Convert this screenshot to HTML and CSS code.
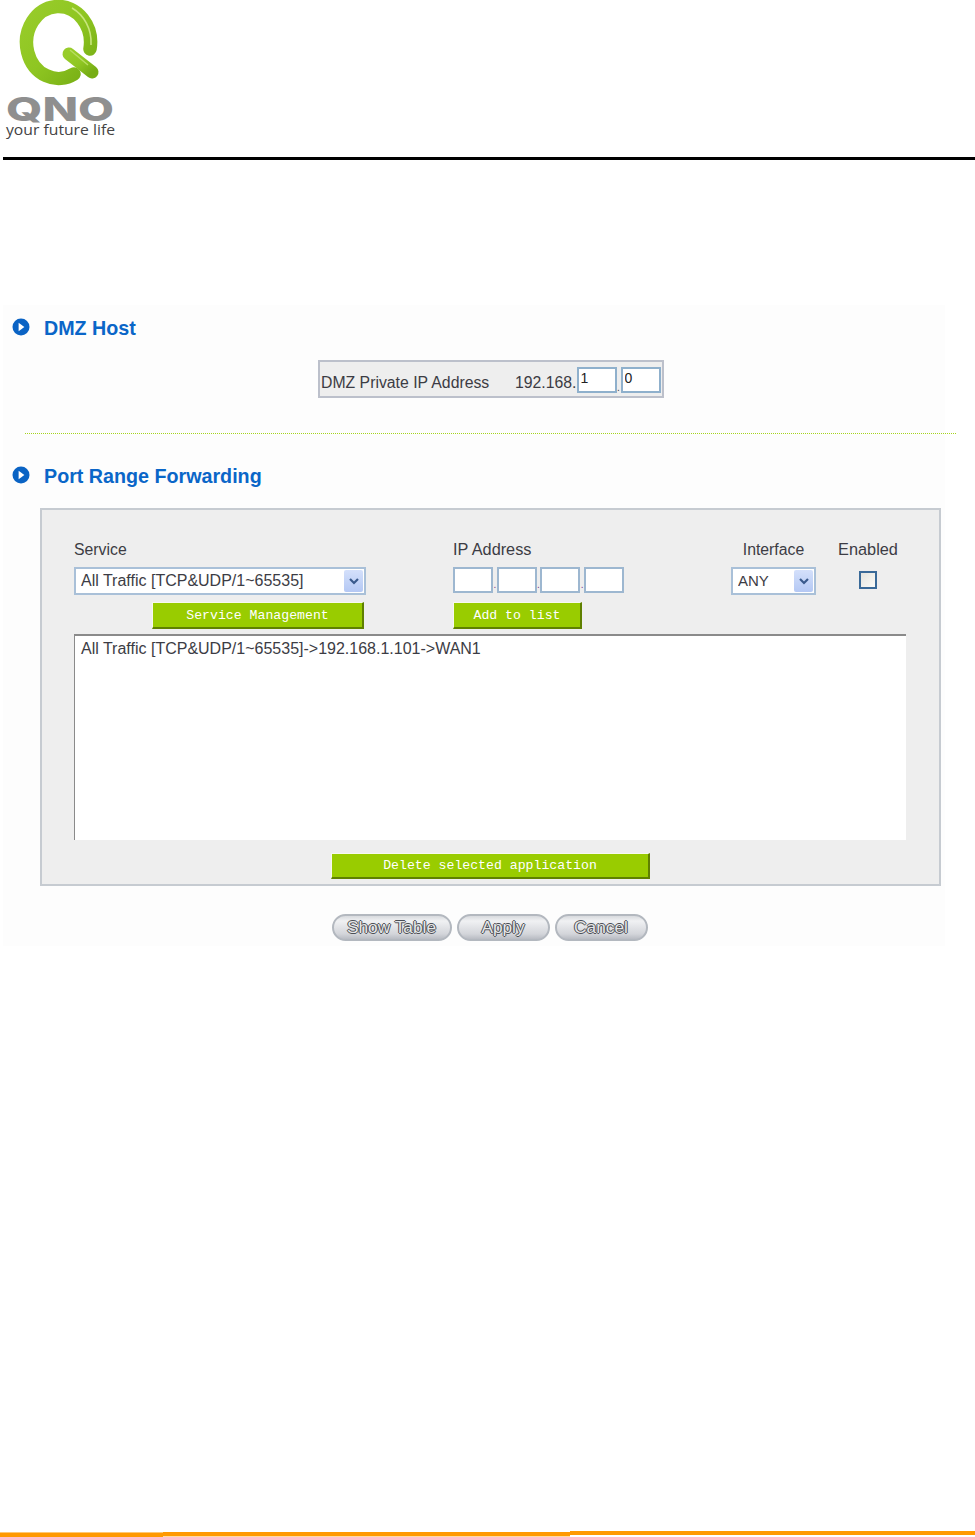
FILE: index.html
```html
<!DOCTYPE html>
<html lang="en">
<head>
    <meta charset="UTF-8">
    <meta name="viewport" content="width=device-width, initial-scale=1.0">
    <title>DMZ Host and Port Range Forwarding</title>
    <link rel="stylesheet" href="styles.css">
</head>
<body>
    <div class="header">
        <svg class="logo" width="120" height="140" viewBox="0 0 120 140">
            <defs>
                <linearGradient id="ring" x1="0" y1="0" x2="1" y2="1">
                    <stop offset="0" stop-color="#98cc2a"/>
                    <stop offset="0.5" stop-color="#8fc622"/>
                    <stop offset="1" stop-color="#76ad14"/>
                </linearGradient>
            </defs>
            <path d="M90 49 A32 36 0 1 0 74 74" fill="none" stroke="url(#ring)" stroke-width="13.5" stroke-linecap="round"/>
            <path d="M69 54 L92 72" fill="none" stroke="url(#ring)" stroke-width="13" stroke-linecap="round"/>
            <path d="M72 8 C84 15 92 29 91 45" fill="none" stroke="#c8e67c" stroke-width="1.6"/>
            <path d="M70 50 L88 65" fill="none" stroke="#b9dd62" stroke-width="1.4"/>
            <text class="logo-name" x="6" y="121" textLength="108" lengthAdjust="spacingAndGlyphs">QNO</text>
            <text class="logo-tag" x="6" y="135" textLength="109" lengthAdjust="spacingAndGlyphs">your future life</text>
        </svg>
    </div>

    <div class="content">
        <h2 class="section-title">
            <svg class="bullet" width="18" height="18" viewBox="0 0 18 18">
                <circle cx="9" cy="9" r="8.5" fill="#0a63c4"/>
                <path d="M6.6 4.8 L12.4 9 L6.6 13.2 Z" fill="#fff"/>
            </svg>
            DMZ Host
        </h2>

        <div class="dmz-box">
            <span class="dmz-label">DMZ Private IP Address</span>
            <span>192.168.</span><input class="octet" type="text" value="1"><span class="dot">.</span><input class="octet" type="text" value="0">
        </div>

        <div class="divider"></div>

        <h2 class="section-title">
            <svg class="bullet" width="18" height="18" viewBox="0 0 18 18">
                <circle cx="9" cy="9" r="8.5" fill="#0a63c4"/>
                <path d="M6.6 4.8 L12.4 9 L6.6 13.2 Z" fill="#fff"/>
            </svg>
            Port Range Forwarding
        </h2>

        <div class="forward-box">
            <div class="form-grid">
                <div>Service</div>
                <div class="wide-label">IP Address</div>
                <div class="center">Interface</div>
                <div class="center wide-label enabled-label">Enabled</div>

                <div class="select-wrap service-select">
                    <select><option>All Traffic [TCP&amp;UDP/1~65535]</option></select>
                    <span class="arrow"><svg width="10" height="7" viewBox="0 0 10 7"><path d="M1 1 L5 5 L9 1" fill="none" stroke="#3a5a8c" stroke-width="2.2"/></svg></span>
                </div>
                <div class="ip-group">
                    <input class="octet-wide" type="text"><span class="dot">.</span><input class="octet-wide" type="text"><span class="dot">.</span><input class="octet-wide" type="text"><span class="dot">.</span><input class="octet-wide" type="text">
                </div>
                <div class="select-wrap iface-select">
                    <select><option>ANY</option></select>
                    <span class="arrow"><svg width="10" height="7" viewBox="0 0 10 7"><path d="M1 1 L5 5 L9 1" fill="none" stroke="#3a5a8c" stroke-width="2.2"/></svg></span>
                </div>
                <div class="center check-cell"><input class="check" type="checkbox"></div>

                <div class="button-cell service-cell"><button class="green-button service-btn">Service Management</button></div>
                <div class="button-cell"><button class="green-button add-btn">Add to list</button></div>
            </div>

            <div class="rule-list">All Traffic [TCP&amp;UDP/1~65535]-&gt;192.168.1.101-&gt;WAN1</div>

            <div class="delete-row"><button class="green-button delete-btn">Delete selected application</button></div>
        </div>

        <div class="actions">
            <button class="pill show-btn">Show Table</button>
            <button class="pill apply-btn">Apply</button>
            <button class="pill cancel-btn">Cancel</button>
        </div>
    </div>

    <div class="footer">
        <div class="foot-a"></div>
        <div class="foot-b"></div>
        <div class="foot-c"></div>
    </div>
</body>
</html>
```

FILE: styles.css
```css
body {
    margin: 0;
    height: 1537px;
    overflow: hidden;
    display: flex;
    flex-direction: column;
    background: #fff;
    color: #3c3c44;
    font-family: "Liberation Sans", Arial, sans-serif;
    font-size: 15.8px;
}

.header {
    height: 157px;
    margin-left: 3px;
    border-bottom: 3px solid #000;
}

.logo {
    display: block;
    margin-left: -3px;
}

.logo-name {
    font-family: Inter, "Liberation Sans", sans-serif;
    font-weight: 800;
    font-size: 33px;
    fill: #8f8f8f;
}

.logo-tag {
    font-family: "Open Sans", "Liberation Sans", sans-serif;
    font-size: 15px;
    fill: #444;
}

.content {
    width: 942px;
    height: 641px;
    margin-top: 145px;
    margin-left: 3px;
    background: #fdfdfd;
    box-sizing: border-box;
    padding-top: 12px;
}

.section-title {
    display: flex;
    align-items: center;
    gap: 14px;
    height: 22px;
    margin: 0 0 0 9px;
    color: #0a66c8;
    font-size: 19.7px;
    font-weight: bold;
}

.bullet {
    margin-top: -3px;
}

.dmz-box {
    display: flex;
    align-items: center;
    width: 346px;
    height: 38px;
    box-sizing: border-box;
    margin: 21px 0 0 315px;
    padding: 2px 0 0 1px;
    background: #eee;
    border: 2px solid #bcc0cb;
    white-space: nowrap;
}

.dmz-label {
    width: 194px;
}

.dmz-box span {
    padding-top: 6px;
}

.dmz-box .dot {
    padding: 0 0 3px;
}

.octet {
    width: 40px;
    height: 26px;
    box-sizing: border-box;
    margin: 0;
    padding: 0 0 5px 2px;
    border: 2px solid #8fb0cc;
    background: #fff;
    color: #222;
    font-family: "Liberation Sans", Arial, sans-serif;
    font-size: 14px;
    outline: none;
}

.dot {
    width: 4px;
    font-size: 10px;
    text-align: center;
    align-self: flex-end;
}

.divider {
    height: 1px;
    margin: 35px 0 0 22px;
    width: 932px;
    background: repeating-linear-gradient(90deg, #a6d41e 0 1px, transparent 1px 2px);
}

.divider + .section-title {
    margin-top: 31px;
}

.forward-box {
    width: 901px;
    height: 378px;
    box-sizing: border-box;
    margin: 21px 0 0 37px;
    padding: 29px 32px 0;
    background: #eee;
    border: 2px solid #c6cbd1;
}

.form-grid {
    display: grid;
    grid-template-columns: 379px 278px 85px 83px;
    grid-template-rows: 19px 37px 34px;
    line-height: 21px;
}

.center {
    text-align: center;
    white-space: nowrap;
}

.wide-label {
    font-size: 16.3px;
}

.enabled-label {
    margin-left: 21px;
    width: 62px;
}

.select-wrap {
    position: relative;
    box-sizing: border-box;
    height: 28px;
    margin-top: 9px;
    border: 2px solid #a9c0d8;
    background: #fff;
}

.service-select {
    width: 292px;
}

.iface-select {
    width: 85px;
}

.select-wrap select {
    appearance: none;
    display: block;
    width: 100%;
    height: 22px;
    margin: 0;
    padding: 0 0 0 5px;
    border: 0;
    background: transparent;
    color: #3c3c44;
    font-family: "Liberation Sans", Arial, sans-serif;
    font-size: 16px;
    outline: none;
}

.iface-select select {
    font-size: 15px;
}

.arrow {
    position: absolute;
    top: 1px;
    right: 1px;
    width: 19px;
    height: 22px;
    display: flex;
    align-items: center;
    justify-content: center;
    border-radius: 2px;
    background: linear-gradient(#d4e0fb, #b4c8f4);
}

.ip-group {
    display: flex;
    margin-top: 9px;
    height: 26px;
}

.octet-wide {
    width: 40px;
    height: 26px;
    box-sizing: border-box;
    margin: 0;
    padding: 0;
    border: 2px solid #9db7d0;
    background: #fff;
    outline: none;
}

.ip-group .dot {
    width: 3.67px;
    color: #7a3b8c;
    line-height: 16px;
}

.check-cell {
    margin-left: 21px;
    width: 62px;
    padding-top: 13px;
}

.check {
    appearance: none;
    display: inline-block;
    width: 18px;
    height: 18px;
    margin: 0;
    box-sizing: border-box;
    border: 2px solid #3a6a98;
    background: linear-gradient(135deg, #e4e4de, #fbfbf8);
}

.button-cell {
    padding-top: 7px;
}

.service-cell {
    padding-left: 78px;
}

.green-button {
    display: block;
    height: 27px;
    box-sizing: border-box;
    margin: 0;
    padding: 0;
    background: #99cc00;
    border: 0;
    border-top: 1px solid #f7f9ee;
    border-left: 1px solid #f7f9ee;
    border-right: 2px solid #5f8000;
    border-bottom: 2px solid #5f8000;
    color: #fff;
    font-family: "Liberation Mono", "Courier New", monospace;
    font-size: 13.2px;
    text-align: center;
}

.service-btn {
    width: 212px;
}

.add-btn {
    width: 129px;
}

.rule-list {
    width: 832px;
    height: 206px;
    box-sizing: border-box;
    margin-top: 5px;
    padding: 4px 0 0 6px;
    background: #fff;
    border-top: 2px solid #8a8a8a;
    border-left: 1px solid #8a8a8a;
    font-size: 16px;
    white-space: nowrap;
}

.delete-row {
    margin-top: 13px;
    margin-left: 257px;
}

.delete-btn {
    width: 319px;
    height: 26px;
}

.actions {
    display: flex;
    justify-content: center;
    gap: 5px;
    margin: 28px 0 0 32px;
    width: 909px;
}

.pill {
    height: 27px;
    box-sizing: border-box;
    margin: 0;
    padding: 0 0 1px;
    border: 2px solid #b3b8bf;
    border-radius: 14px;
    background: linear-gradient(#d8dade, #f0f1f3 22%, #d3d5da 78%, #b9bcc3);
    color: #e6e7e8;
    font-family: "Liberation Sans", Arial, sans-serif;
    font-size: 17.3px;
    text-shadow: 1px 0 #4c4f55, -1px 0 #4c4f55, 0 1px #4c4f55, 0 -1px #4c4f55;
}

.show-btn {
    width: 120px;
}

.apply-btn {
    width: 93px;
}

.cancel-btn {
    width: 93px;
}

.footer {
    display: flex;
    align-items: flex-start;
    height: 6px;
    margin-top: auto;
}

.foot-a {
    width: 163px;
    height: 5px;
    margin-top: 1px;
    background: #ff9900;
    border-top: 1px solid #ffc873;
    box-sizing: border-box;
}

.foot-b {
    width: 407px;
    height: 4px;
    margin-top: 1px;
    background: #ff9900;
    border-bottom: 1px solid #ffd9a0;
}

.foot-c {
    flex: 1;
    height: 4px;
    background: #ff9900;
}
```
